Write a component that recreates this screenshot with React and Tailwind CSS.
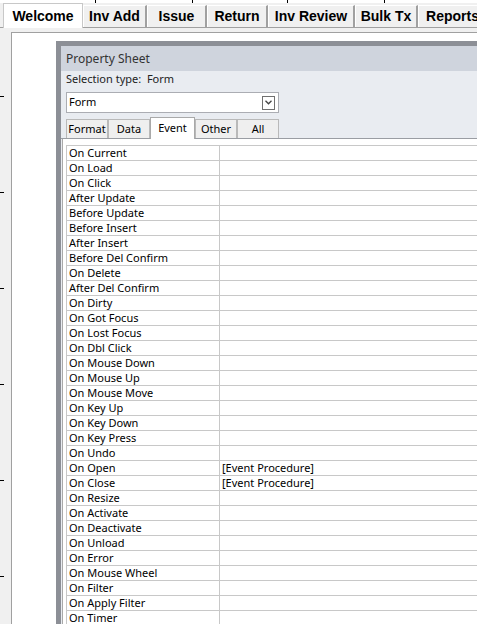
import React from 'react'

const topTabs = [
  { label: 'Welcome', w: 'w-[80px]', active: true },
  { label: 'Inv Add', w: 'w-[64px]' },
  { label: 'Issue', w: 'w-[60px]' },
  { label: 'Return', w: 'w-[61px]' },
  { label: 'Inv Review', w: 'w-[87px]' },
  { label: 'Bulk Tx', w: 'w-[63px]' },
  { label: 'Reports', w: 'w-[70px]' },
]

const sheetTabs = [
  { label: 'Format', w: 'w-[42px]' },
  { label: 'Data', w: 'w-[42px]' },
  { label: 'Event', w: 'w-[45px]', active: true },
  { label: 'Other', w: 'w-[42px]' },
  { label: 'All', w: 'w-[42px]' },
]

const events = [
  ['On Current', ''],
  ['On Load', ''],
  ['On Click', ''],
  ['After Update', ''],
  ['Before Update', ''],
  ['Before Insert', ''],
  ['After Insert', ''],
  ['Before Del Confirm', ''],
  ['On Delete', ''],
  ['After Del Confirm', ''],
  ['On Dirty', ''],
  ['On Got Focus', ''],
  ['On Lost Focus', ''],
  ['On Dbl Click', ''],
  ['On Mouse Down', ''],
  ['On Mouse Up', ''],
  ['On Mouse Move', ''],
  ['On Key Up', ''],
  ['On Key Down', ''],
  ['On Key Press', ''],
  ['On Undo', ''],
  ['On Open', '[Event Procedure]'],
  ['On Close', '[Event Procedure]'],
  ['On Resize', ''],
  ['On Activate', ''],
  ['On Deactivate', ''],
  ['On Unload', ''],
  ['On Error', ''],
  ['On Mouse Wheel', ''],
  ['On Filter', ''],
  ['On Apply Filter', ''],
  ['On Timer', ''],
]

const TopTab = ({ label, w, active }) =>
  active ? (
    <div className={`${w} h-[25px] shrink-0 -mb-px bg-white border-t border-l border-r border-[#c8c8c8] flex items-center justify-center text-[14px] font-bold text-black`}>
      {label}
    </div>
  ) : (
    <div className={`${w} h-[22px] shrink-0 bg-[#f0f0f0] border-t border-l border-white border-r-2 border-r-[#a0a0a0] flex items-center justify-center text-[14px] font-bold text-black`}>
      {label}
    </div>
  )

const SheetTab = ({ label, w, active }) =>
  active ? (
    <div className={`${w} h-[22px] shrink-0 -mb-px bg-white border-t border-l border-r border-[#a9a9a9] flex items-center justify-center`}>
      {label}
    </div>
  ) : (
    <div className={`${w} h-[19px] shrink-0 bg-[#efefef] border-t border-l border-r border-[#b9b9b9] flex items-center justify-center`}>
      {label}
    </div>
  )

export default function App() {
  return (
    <div
      className="w-[477px] h-[624px] overflow-hidden bg-[#f0f0f0] flex flex-col"
      style={{ fontFamily: '"Noto Sans", Arial, sans-serif' }}
    >
      {/* ruler ticks */}
      <div className="h-[3px] bg-white flex shrink-0">
        <div className="ml-[95px] w-px h-[3px] bg-black" />
        <div className="ml-[96px] w-px h-[3px] bg-black" />
        <div className="ml-[94px] w-px h-[3px] bg-black" />
        <div className="ml-[96px] w-px h-[3px] bg-black" />
      </div>

      {/* main tabs */}
      <div
        className="h-[25px] shrink-0 flex items-end pl-[3px] border-b border-[#a0a0a0] bg-[#f0f0f0] overflow-visible"
        style={{ fontFamily: '"Liberation Sans", Arial, sans-serif' }}
      >
        {topTabs.map((t) => (
          <TopTab key={t.label} {...t} />
        ))}
      </div>

      <div className="flex-1 flex min-h-0">
        {/* left strip with ruler marks */}
        <div className="w-[11px] shrink-0 flex flex-col pt-[68px] gap-[95px]">
          {[0, 1, 2, 3, 4, 5].map((i) => (
            <div key={i} className="w-[4px] h-px bg-black" />
          ))}
        </div>

        <div className="flex-1 mt-[4px] bg-white border-l border-t border-[#a0a0a0] pl-[44px] pt-[8px] overflow-hidden">
          {/* property sheet */}
          <div className="w-[440px] border-t-[5px] border-l-[5px] border-[#8c8f96] text-[11px] text-black">
            <div className="h-[25px] bg-[#cfd4dd] pl-[5px] flex items-center text-[12px] text-[#333]">
              Property Sheet
            </div>
            <div className="bg-[#e9ecf1]">
              <div className="h-[17px] pl-[5px] flex items-center text-[#222]">
                Selection type:&nbsp;&nbsp;Form
              </div>
              <div className="ml-[5px] mt-[4px] w-[213px] h-[21px] bg-white border border-[#abadb3] flex items-center justify-between pl-[2px] pr-[3px]">
                <span>Form</span>
                <div className="w-[13px] h-[14px] border border-[#707070] flex items-center justify-center">
                  <svg width="7" height="5" viewBox="0 0 7 5">
                    <path d="M0.5 0.8 L3.5 3.8 L6.5 0.8" fill="none" stroke="#444" strokeWidth="1.3" />
                  </svg>
                </div>
              </div>
              <div className="mt-[5px] h-[21px] pl-[5px] flex items-end border-b border-[#9a9da3]">
                {sheetTabs.map((t) => (
                  <SheetTab key={t.label} {...t} />
                ))}
              </div>
            </div>
            <div className="flex bg-[#e9ecf1]">
              <div className="ml-[1px] flex-1 bg-white border-l border-[#a9a9a9] pl-[3px] pt-[6px]">
                <div className="border-t border-l border-[#c8c8c8]">
                  {events.map(([name, val]) => (
                    <div key={name} className="h-[15px] flex border-b border-[#c8c8c8] leading-[14px]">
                      <div className="w-[153px] shrink-0 border-r border-[#c8c8c8] pl-[2px] whitespace-nowrap">
                        {name}
                      </div>
                      <div className="flex-1 pl-[2px] whitespace-nowrap">{val}</div>
                    </div>
                  ))}
                </div>
              </div>
            </div>
          </div>
        </div>
      </div>
    </div>
  )
}
